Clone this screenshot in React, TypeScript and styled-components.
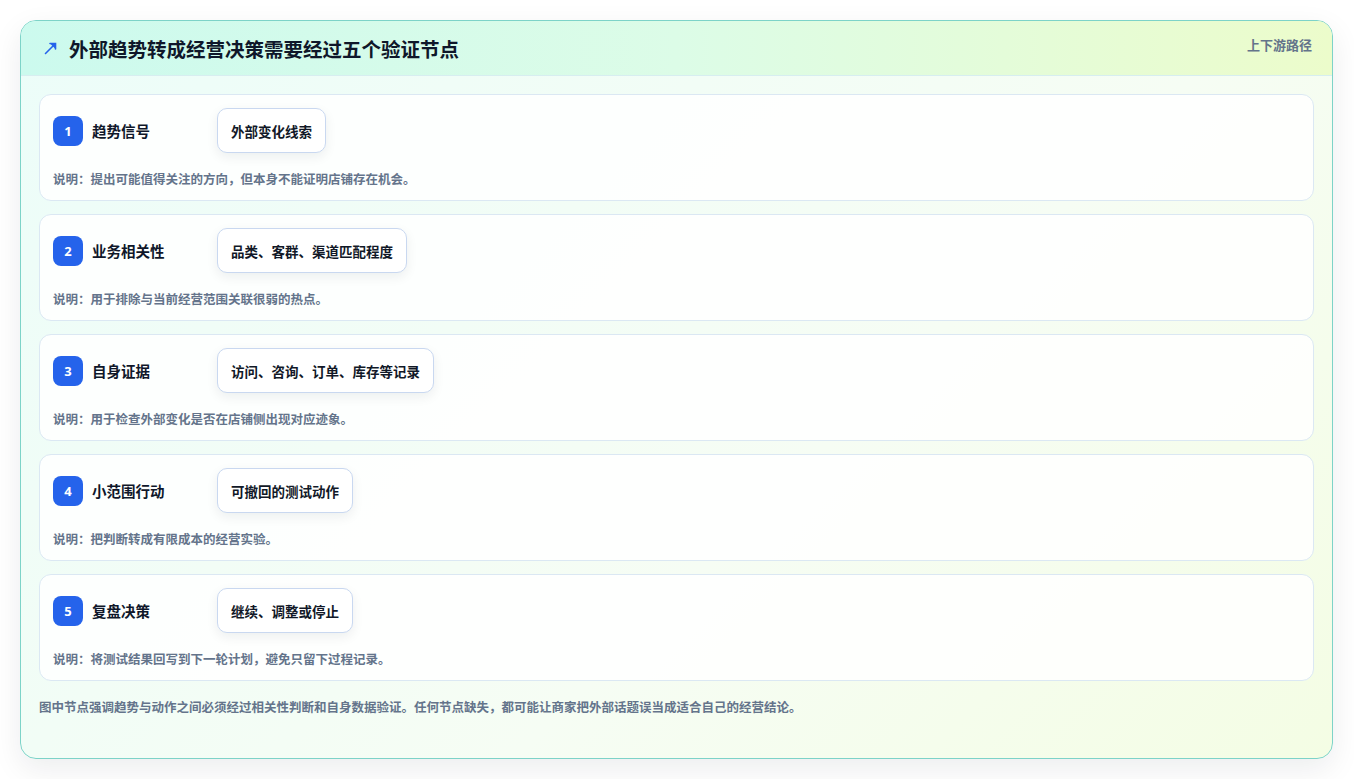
import React from "react";
import styled, { createGlobalStyle } from "styled-components";

const Global = createGlobalStyle`
  body { margin: 0; background: #fff; font-family: "Noto Sans CJK SC", "Noto Sans", sans-serif; }
`;

const Page = styled.div`
  padding: 20px;
`;

const Card = styled.div`
  width: 1311px;
  height: 737px;
  border: 1px solid #7dd3c8;
  border-radius: 16px;
  overflow: hidden;
  background: linear-gradient(135deg, #ecfdf9 0%, #f6fdf4 60%, #f4fde4 100%);
  box-shadow: 0 10px 30px rgba(15, 23, 42, 0.08);
  display: flex;
  flex-direction: column;
`;

const Header = styled.div`
  height: 54px;
  display: flex;
  align-items: center;
  padding: 0 20px 0 23px;
  background: linear-gradient(90deg, #ccfaee 0%, #dcfce7 50%, #ecfccb 100%);
  border-bottom: 1px solid #d7eef0;
  position: relative;
`;

const Title = styled.h1`
  margin: 0 0 0 11px;
  font-size: 19.5px;
  font-weight: 700;
  color: #0f172a;
`;

const Tag = styled.span`
  position: absolute;
  right: 20px;
  top: 14px;
  font-size: 13px;
  font-weight: 700;
  color: #64748b;
`;

const Body = styled.div`
  padding: 18px 18px 0 18px;
  display: flex;
  flex-direction: column;
  gap: 13px;
`;

const Row = styled.div`
  height: 107px;
  box-sizing: border-box;
  background: rgba(255, 255, 255, 0.85);
  border: 1px solid #dbe8f3;
  border-radius: 12px;
  padding: 13px 14px 0 13px;
  display: flex;
  flex-direction: column;
`;

const Top = styled.div`
  display: flex;
  align-items: center;
  height: 45px;
`;

const Badge = styled.div`
  width: 30px;
  height: 30px;
  border-radius: 8px;
  background: #2563eb;
  color: #fff;
  font-size: 13px;
  font-weight: 700;
  display: flex;
  align-items: center;
  justify-content: center;
  font-family: "Noto Sans", sans-serif;
`;

const Label = styled.div`
  width: 125px;
  margin-left: 9px;
  font-size: 14.5px;
  font-weight: 700;
  color: #0f172a;
`;

const Chip = styled.div`
  height: 45px;
  box-sizing: border-box;
  padding: 0 13px;
  display: flex;
  align-items: center;
  border: 1px solid #c9d8f0;
  border-radius: 10px;
  background: #fff;
  box-shadow: 0 4px 12px rgba(15, 23, 42, 0.07);
  font-size: 13.5px;
  font-weight: 700;
  color: #111827;
`;

const Desc = styled.div`
  margin-top: 16px;
  font-size: 12.5px;
  font-weight: 700;
  color: #64748b;
`;

const Footer = styled.p`
  margin: 16px 18px 0 18px;
  font-size: 12.5px;
  font-weight: 700;
  color: #64748b;
`;

const steps = [
  { label: "趋势信号", chip: "外部变化线索", desc: "说明：提出可能值得关注的方向，但本身不能证明店铺存在机会。" },
  { label: "业务相关性", chip: "品类、客群、渠道匹配程度", desc: "说明：用于排除与当前经营范围关联很弱的热点。" },
  { label: "自身证据", chip: "访问、咨询、订单、库存等记录", desc: "说明：用于检查外部变化是否在店铺侧出现对应迹象。" },
  { label: "小范围行动", chip: "可撤回的测试动作", desc: "说明：把判断转成有限成本的经营实验。" },
  { label: "复盘决策", chip: "继续、调整或停止", desc: "说明：将测试结果回写到下一轮计划，避免只留下过程记录。" },
];

export default function App() {
  return (
    <Page>
      <Global />
      <Card>
        <Header>
          <svg width="14" height="14" viewBox="0 0 14 14" fill="none" stroke="#2563eb" strokeWidth="1.6" strokeLinecap="round">
            <path d="M1.5 12.5 L11 3" />
            <path d="M6 2.5 H11.5 V8" fill="#2563eb" />
          </svg>
          <Title>外部趋势转成经营决策需要经过五个验证节点</Title>
          <Tag>上下游路径</Tag>
        </Header>
        <Body>
          {steps.map((s, i) => (
            <Row key={s.label}>
              <Top>
                <Badge>{i + 1}</Badge>
                <Label>{s.label}</Label>
                <Chip>{s.chip}</Chip>
              </Top>
              <Desc>{s.desc}</Desc>
            </Row>
          ))}
        </Body>
        <Footer>图中节点强调趋势与动作之间必须经过相关性判断和自身数据验证。任何节点缺失，都可能让商家把外部话题误当成适合自己的经营结论。</Footer>
      </Card>
    </Page>
  );
}
